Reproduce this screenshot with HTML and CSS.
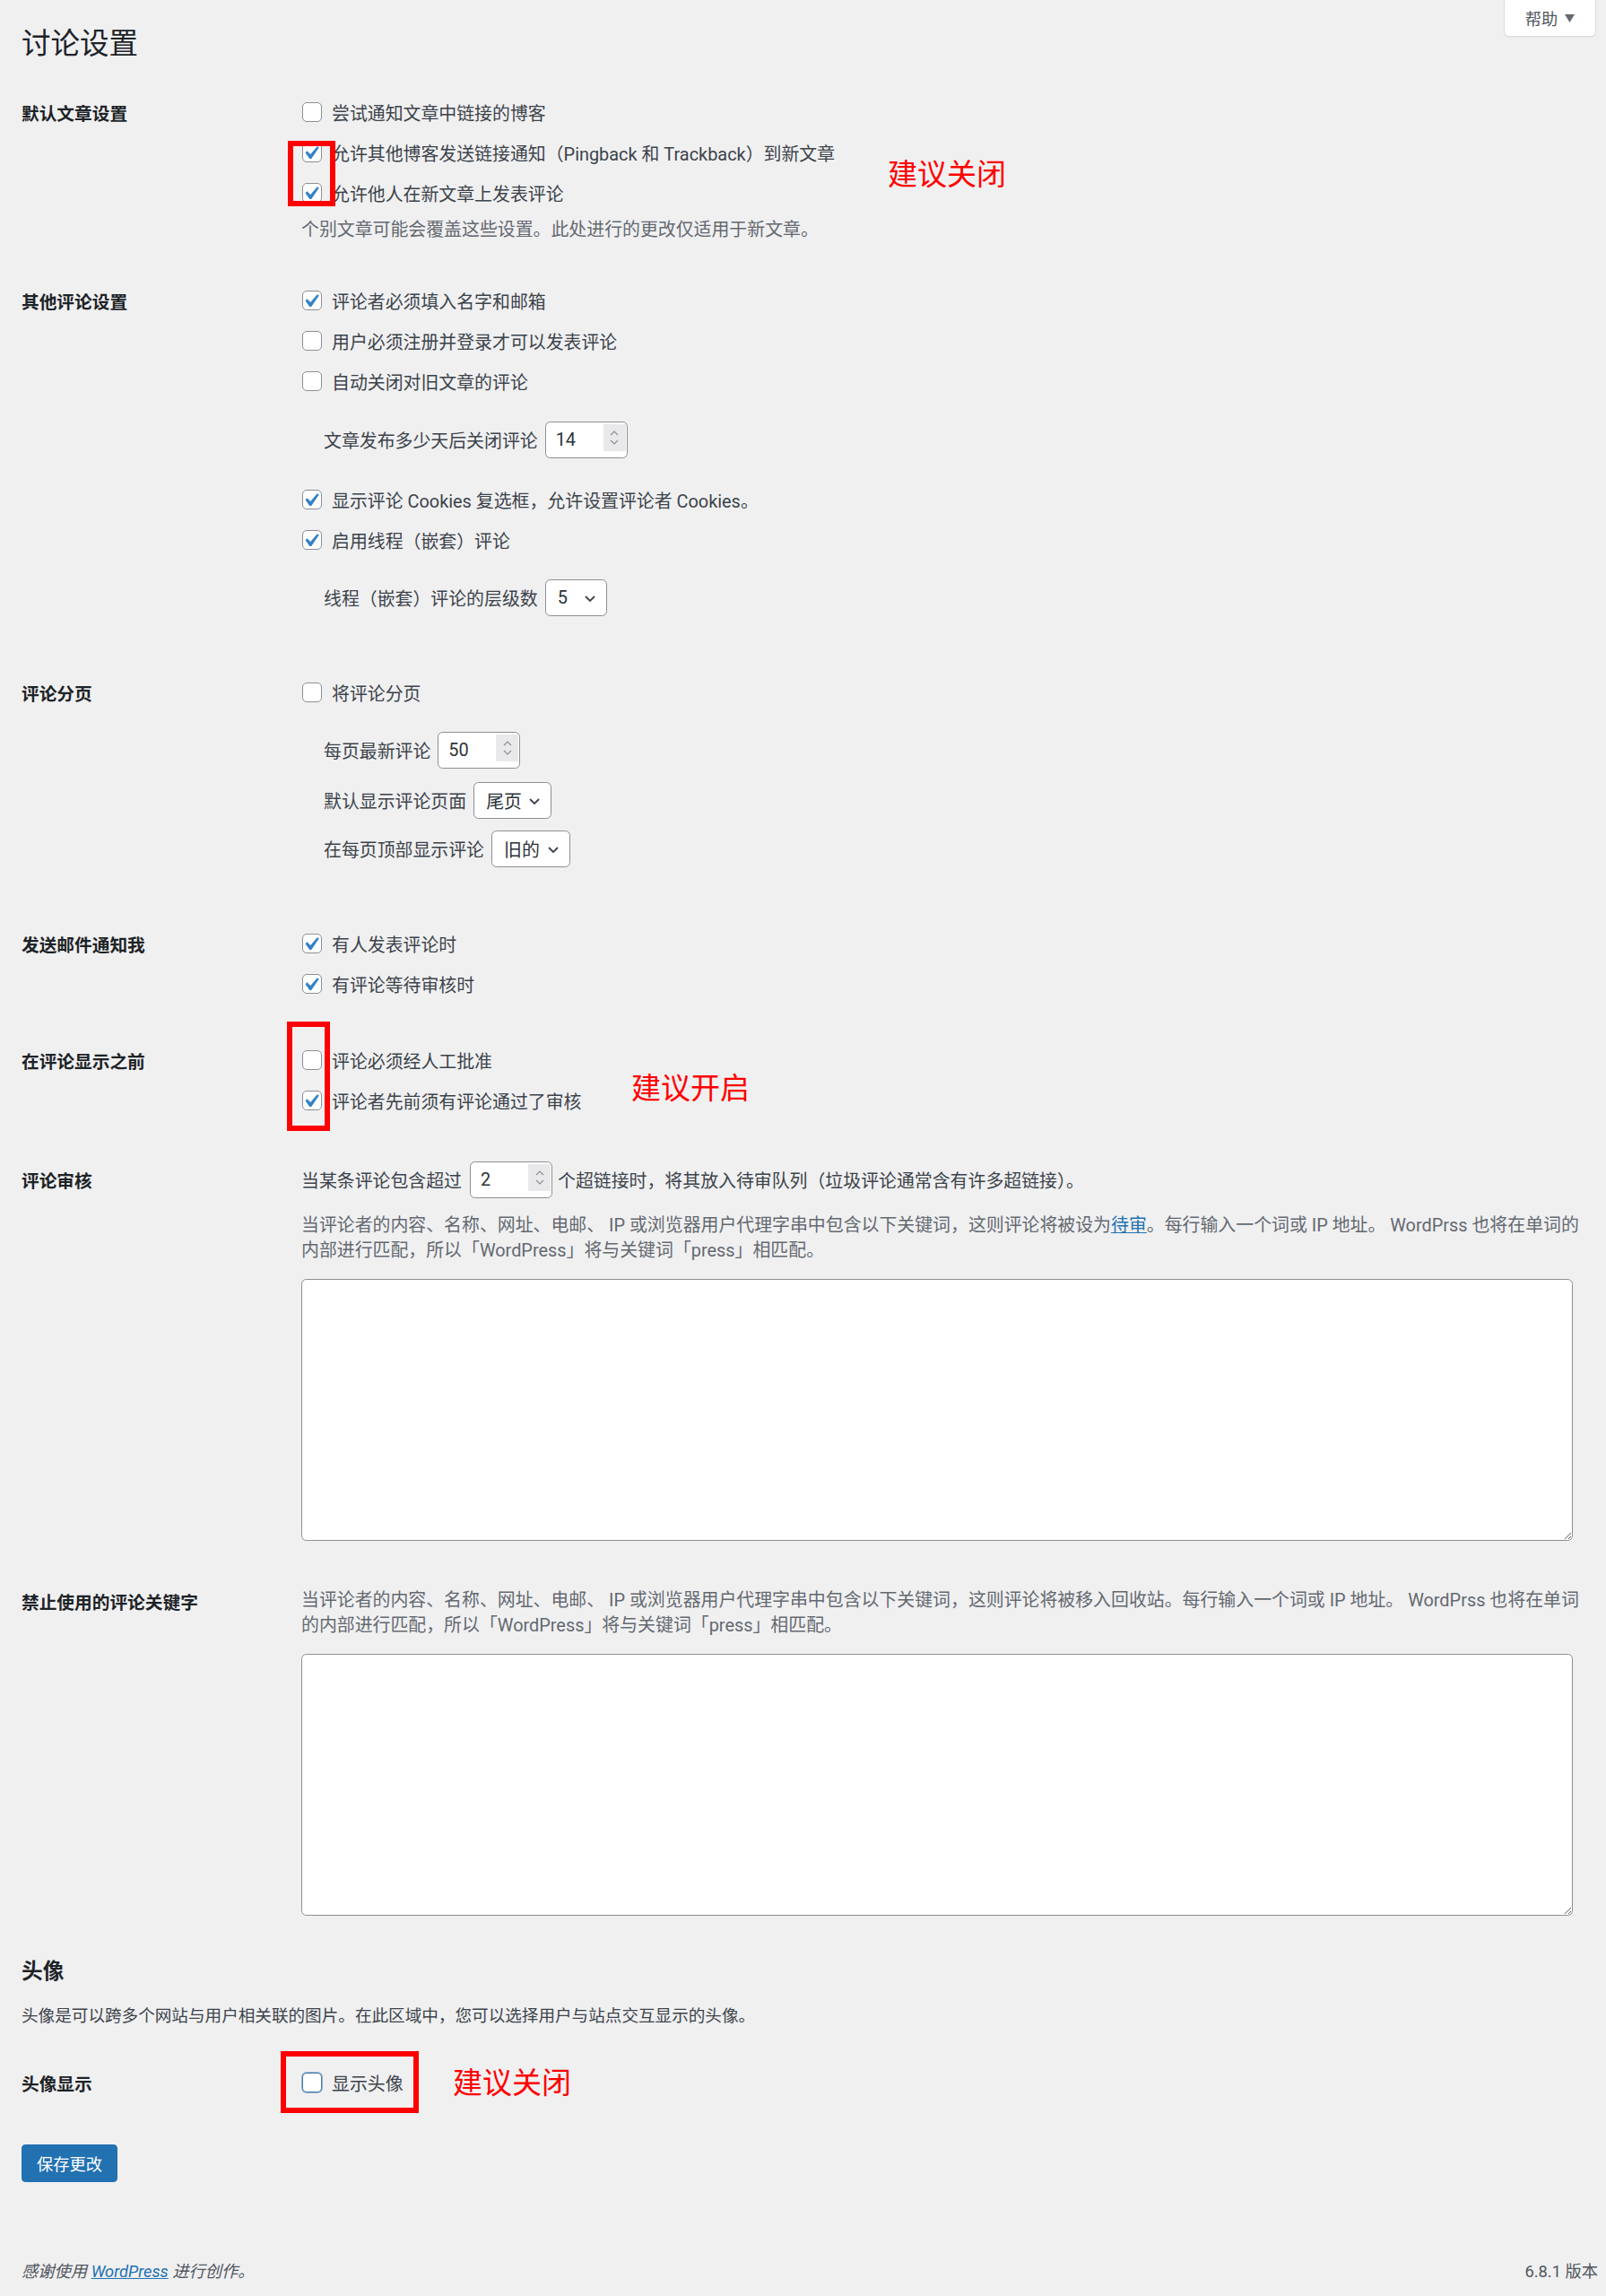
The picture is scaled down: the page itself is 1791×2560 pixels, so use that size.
FILE: index.html
```html
<!DOCTYPE html>
<html lang="zh-CN">
<head>
<meta charset="utf-8">
<title>讨论设置</title>
<link rel="stylesheet" href="styles.css">
</head>
<body>
<div class="page">
  <div class="help-tab">帮助 <svg class="help-arrow" viewBox="0 0 10 8" width="11" height="9"><path d="M0 0h10L5 8z" fill="#646970"/></svg></div>

  <h1 class="title">讨论设置</h1>

  <div class="row r1">
    <div class="th"><div class="th-line">默认文章设置</div></div>
    <div class="td">
      <div class="line"><span class="cb"></span><span>尝试通知文章中链接的博客</span></div>
      <div class="line"><span class="cb"><svg class="tick" viewBox="0 0 20 20"><path d="M14.83 4.89l1.34.94-5.81 8.38H9.02L5.78 9.67l1.34-1.25 2.57 2.4z"/></svg></span><span>允许其他博客发送链接通知（Pingback 和 Trackback）到新文章</span></div>
      <div class="line"><span class="cb"><svg class="tick" viewBox="0 0 20 20"><path d="M14.83 4.89l1.34.94-5.81 8.38H9.02L5.78 9.67l1.34-1.25 2.57 2.4z"/></svg></span><span>允许他人在新文章上发表评论</span></div>
      <p class="desc d1">个别文章可能会覆盖这些设置。此处进行的更改仅适用于新文章。</p>
    </div>
  </div>

  <div class="row r2">
    <div class="th"><div class="th-line">其他评论设置</div></div>
    <div class="td">
      <div class="line"><span class="cb"><svg class="tick" viewBox="0 0 20 20"><path d="M14.83 4.89l1.34.94-5.81 8.38H9.02L5.78 9.67l1.34-1.25 2.57 2.4z"/></svg></span><span>评论者必须填入名字和邮箱</span></div>
      <div class="line"><span class="cb"></span><span>用户必须注册并登录才可以发表评论</span></div>
      <div class="line"><span class="cb"></span><span>自动关闭对旧文章的评论</span></div>
      <div class="sub s-mt22"><span>文章发布多少天后关闭评论</span><span class="num">14<span class="spin"><svg viewBox="0 0 10 20" width="10" height="20"><path d="M1 7l4-4 4 4M1 13l4 4 4-4" fill="none" stroke="#8c8f94" stroke-width="1.2"/></svg></span></span></div>
      <div class="line l-mt24"><span class="cb"><svg class="tick" viewBox="0 0 20 20"><path d="M14.83 4.89l1.34.94-5.81 8.38H9.02L5.78 9.67l1.34-1.25 2.57 2.4z"/></svg></span><span>显示评论 Cookies 复选框，允许设置评论者 Cookies。</span></div>
      <div class="line"><span class="cb"><svg class="tick" viewBox="0 0 20 20"><path d="M14.83 4.89l1.34.94-5.81 8.38H9.02L5.78 9.67l1.34-1.25 2.57 2.4z"/></svg></span><span>启用线程（嵌套）评论</span></div>
      <div class="sub s-mt21"><span>线程（嵌套）评论的层级数</span><span class="sel w69">5<svg class="chev" viewBox="0 0 12 7" width="12" height="7"><path d="M1 1l5 5 5-5" fill="none" stroke="#3c434a" stroke-width="1.8"/></svg></span></div>
    </div>
  </div>

  <div class="row r3">
    <div class="th"><div class="th-line">评论分页</div></div>
    <div class="td">
      <div class="line"><span class="cb"></span><span>将评论分页</span></div>
      <div class="sub s-mt21"><span>每页最新评论</span><span class="num">50<span class="spin"><svg viewBox="0 0 10 20" width="10" height="20"><path d="M1 7l4-4 4 4M1 13l4 4 4-4" fill="none" stroke="#8c8f94" stroke-width="1.2"/></svg></span></span></div>
      <div class="sub s-mt15"><span>默认显示评论页面</span><span class="sel w87">尾页<svg class="chev" viewBox="0 0 12 7" width="12" height="7"><path d="M1 1l5 5 5-5" fill="none" stroke="#3c434a" stroke-width="1.8"/></svg></span></div>
      <div class="sub s-mt13"><span>在每页顶部显示评论</span><span class="sel w88">旧的<svg class="chev" viewBox="0 0 12 7" width="12" height="7"><path d="M1 1l5 5 5-5" fill="none" stroke="#3c434a" stroke-width="1.8"/></svg></span></div>
    </div>
  </div>

  <div class="row r4">
    <div class="th"><div class="th-line">发送邮件通知我</div></div>
    <div class="td">
      <div class="line"><span class="cb"><svg class="tick" viewBox="0 0 20 20"><path d="M14.83 4.89l1.34.94-5.81 8.38H9.02L5.78 9.67l1.34-1.25 2.57 2.4z"/></svg></span><span>有人发表评论时</span></div>
      <div class="line"><span class="cb"><svg class="tick" viewBox="0 0 20 20"><path d="M14.83 4.89l1.34.94-5.81 8.38H9.02L5.78 9.67l1.34-1.25 2.57 2.4z"/></svg></span><span>有评论等待审核时</span></div>
    </div>
  </div>

  <div class="row r5">
    <div class="th"><div class="th-line">在评论显示之前</div></div>
    <div class="td">
      <div class="line"><span class="cb"></span><span>评论必须经人工批准</span></div>
      <div class="line"><span class="cb"><svg class="tick" viewBox="0 0 20 20"><path d="M14.83 4.89l1.34.94-5.81 8.38H9.02L5.78 9.67l1.34-1.25 2.57 2.4z"/></svg></span><span>评论者先前须有评论通过了审核</span></div>
    </div>
  </div>

  <div class="row r6">
    <div class="th"><div class="th-line">评论审核</div></div>
    <div class="td">
      <div class="line"><span>当某条评论包含超过</span><span class="num num-inline">2<span class="spin"><svg viewBox="0 0 10 20" width="10" height="20"><path d="M1 7l4-4 4 4M1 13l4 4 4-4" fill="none" stroke="#8c8f94" stroke-width="1.2"/></svg></span></span><span>个超链接时，将其放入待审队列（垃圾评论通常含有许多超链接）。</span></div>
      <div class="desc-block">
        <p class="desc">当评论者的内容、名称、网址、电邮、 IP 或浏览器用户代理字串中包含以下关键词，这则评论将被设为<a class="link" href="#">待审</a>。每行输入一个词或 IP 地址。 WordPrss 也将在单词的</p>
        <p class="desc">内部进行匹配，所以「WordPress」将与关键词「press」相匹配。</p>
      </div>
      <textarea class="area"></textarea>
    </div>
  </div>

  <div class="row r7">
    <div class="th"><div class="th-line th-short">禁止使用的评论关键字</div></div>
    <div class="td">
      <div class="desc-block first">
        <p class="desc">当评论者的内容、名称、网址、电邮、 IP 或浏览器用户代理字串中包含以下关键词，这则评论将被移入回收站。每行输入一个词或 IP 地址。 WordPrss 也将在单词</p>
        <p class="desc">的内部进行匹配，所以「WordPress」将与关键词「press」相匹配。</p>
      </div>
      <textarea class="area"></textarea>
    </div>
  </div>

  <h2 class="sec-title">头像</h2>
  <p class="sec-desc">头像是可以跨多个网站与用户相关联的图片。在此区域中，您可以选择用户与站点交互显示的头像。</p>

  <div class="row r8">
    <div class="th"><div class="th-line">头像显示</div></div>
    <div class="td">
      <div class="line"><span class="cb cb-focus"></span><span>显示头像</span></div>
    </div>
  </div>

  <div class="actions"><span class="btn">保存更改</span></div>

  <div class="footer">
    <span class="thanks">感谢使用 <a class="link" href="#">WordPress</a> 进行创作。</span>
    <span class="version">6.8.1 版本</span>
  </div>

  <div class="mark box1"></div>
  <div class="mark box2"></div>
  <div class="mark box3"></div>
  <div class="note note1">建议关闭</div>
  <div class="note note2">建议开启</div>
  <div class="note note3">建议关闭</div>
</div>
</body>
</html>
```

FILE: styles.css
```css
* { box-sizing: border-box; }

body {
  margin: 0;
  background: #f0f0f1;
  font-family: "Roboto", "Noto Sans CJK SC", sans-serif;
  font-size: 19.9px;
  color: #3c434a;
}

.page {
  position: relative;
  padding: 28px 9px 0 24px;
  min-height: 2560px;
}

.help-tab {
  position: absolute;
  top: 0;
  right: 11px;
  width: 103px;
  height: 41px;
  background: #fff;
  border: 1.4px solid #dcdcde;
  border-top: none;
  border-radius: 0 0 5.6px 5.6px;
  box-shadow: 0 1px 1px rgba(0, 0, 0, 0.04);
  display: flex;
  align-items: center;
  justify-content: center;
  gap: 8px;
  font-size: 18.2px;
  color: #50575e;
}

.title {
  margin: 0;
  font-size: 32.5px;
  line-height: 42px;
  font-weight: 400;
  color: #1d2327;
}

.row {
  display: grid;
  grid-template-columns: 312px 1418px;
}

.th {
  font-weight: 600;
  font-size: 19.7px;
  color: #1d2327;
}

.th-line {
  height: 45px;
  display: flex;
  align-items: center;
}

.th-line.th-short {
  height: 28px;
}

.td {
  display: flex;
  flex-direction: column;
  align-items: flex-start;
}

.line {
  height: 45px;
  display: flex;
  align-items: center;
  white-space: nowrap;
}

.cb {
  position: relative;
  flex: none;
  width: 22px;
  height: 22px;
  margin-left: 1px;
  margin-right: 11px;
  background: #fff;
  border: 1.4px solid #8c8f94;
  border-radius: 5px;
}

.cb-focus {
  border-color: #4a7ba6;
  box-shadow: 0 0 0 1px #8fb1cf;
}

.tick {
  position: absolute;
  left: -5.6px;
  top: -4.2px;
  width: 29.4px;
  height: 29.4px;
  fill: #3582c4;
}

.desc {
  margin: 0;
  color: #646970;
  line-height: 28px;
  white-space: nowrap;
}

.d1 { margin-top: 5.5px; }

.sub {
  height: 41px;
  display: flex;
  align-items: center;
  gap: 8px;
  padding-left: 25px;
  white-space: nowrap;
}

.s-mt22 { margin-top: 22px; }
.s-mt21 { margin-top: 21px; }
.s-mt15 { margin-top: 15px; }
.s-mt13 { margin-top: 13px; }
.l-mt24 { margin-top: 24px; }

.num {
  position: relative;
  width: 92px;
  height: 41px;
  display: flex;
  align-items: center;
  padding-left: 11px;
  background: #fff;
  border: 1.4px solid #8c8f94;
  border-radius: 5.6px;
  color: #2c3338;
}

.num-inline {
  margin: 0 6px 0 9px;
}

.spin {
  position: absolute;
  right: 1px;
  top: 2px;
  bottom: 7px;
  width: 25px;
  background: #e9e9eb;
  display: flex;
  align-items: center;
  justify-content: center;
}

.sel {
  position: relative;
  height: 41px;
  display: flex;
  align-items: center;
  padding-left: 13px;
  background: #fff;
  border: 1.4px solid #8c8f94;
  border-radius: 5.6px;
  color: #2c3338;
}

.w69 { width: 69px; }
.w87 { width: 87px; }
.w88 { width: 88px; }

.chev {
  position: absolute;
  right: 12px;
  top: 17px;
}

.desc-block {
  margin-top: 15px;
}

.desc-block.first {
  margin-top: 0;
}

.link {
  color: #2271b1;
  text-decoration: underline;
}

.area {
  display: block;
  width: 1418px;
  height: 292px;
  margin: 17px 0 0;
  background: #fff;
  border: 1.4px solid #8c8f94;
  border-radius: 5.6px;
  resize: vertical;
  font: inherit;
}

.r1 { margin-top: 32.8px; }
.r2 { margin-top: 41.5px; }
.r3 { margin-top: 63px; }
.r4 { margin-top: 63px; }
.r5 { margin-top: 40px; }
.r6 { margin-top: 43.5px; }
.r7 { margin-top: 53px; }
.r8 { margin-top: 38.5px; }

.sec-title {
  margin: 47px 0 0;
  font-size: 23.7px;
  line-height: 30px;
  font-weight: 600;
  color: #1d2327;
}

.sec-desc {
  margin: 22px 0 0;
  font-size: 18.6px;
  line-height: 26px;
  color: #3c434a;
}

.actions {
  margin-top: 46.5px;
  display: flex;
}

.btn {
  height: 42px;
  padding: 0 16px;
  display: flex;
  align-items: center;
  background: #2271b1;
  border: 1.4px solid #2271b1;
  border-radius: 4.2px;
  color: #fff;
  font-size: 18.3px;
}

.footer {
  margin-top: 86px;
  display: flex;
  justify-content: space-between;
  line-height: 28px;
  font-size: 18.3px;
  color: #50575e;
}

.thanks {
  font-style: italic;
}

.mark {
  position: absolute;
  border: 6.5px solid #f00;
}

.box1 { left: 321px; top: 157px; width: 53px; height: 73px; }
.box2 { left: 320px; top: 1139px; width: 48px; height: 122px; }
.box3 { left: 313px; top: 2287px; width: 154px; height: 69px; }

.note {
  position: absolute;
  font-family: "Noto Sans CJK SC", sans-serif;
  font-size: 33px;
  line-height: 40px;
  color: #f00;
  white-space: nowrap;
}

.note1 { left: 990px; top: 172px; }
.note2 { left: 704px; top: 1191px; }
.note3 { left: 505px; top: 2300px; }
```
